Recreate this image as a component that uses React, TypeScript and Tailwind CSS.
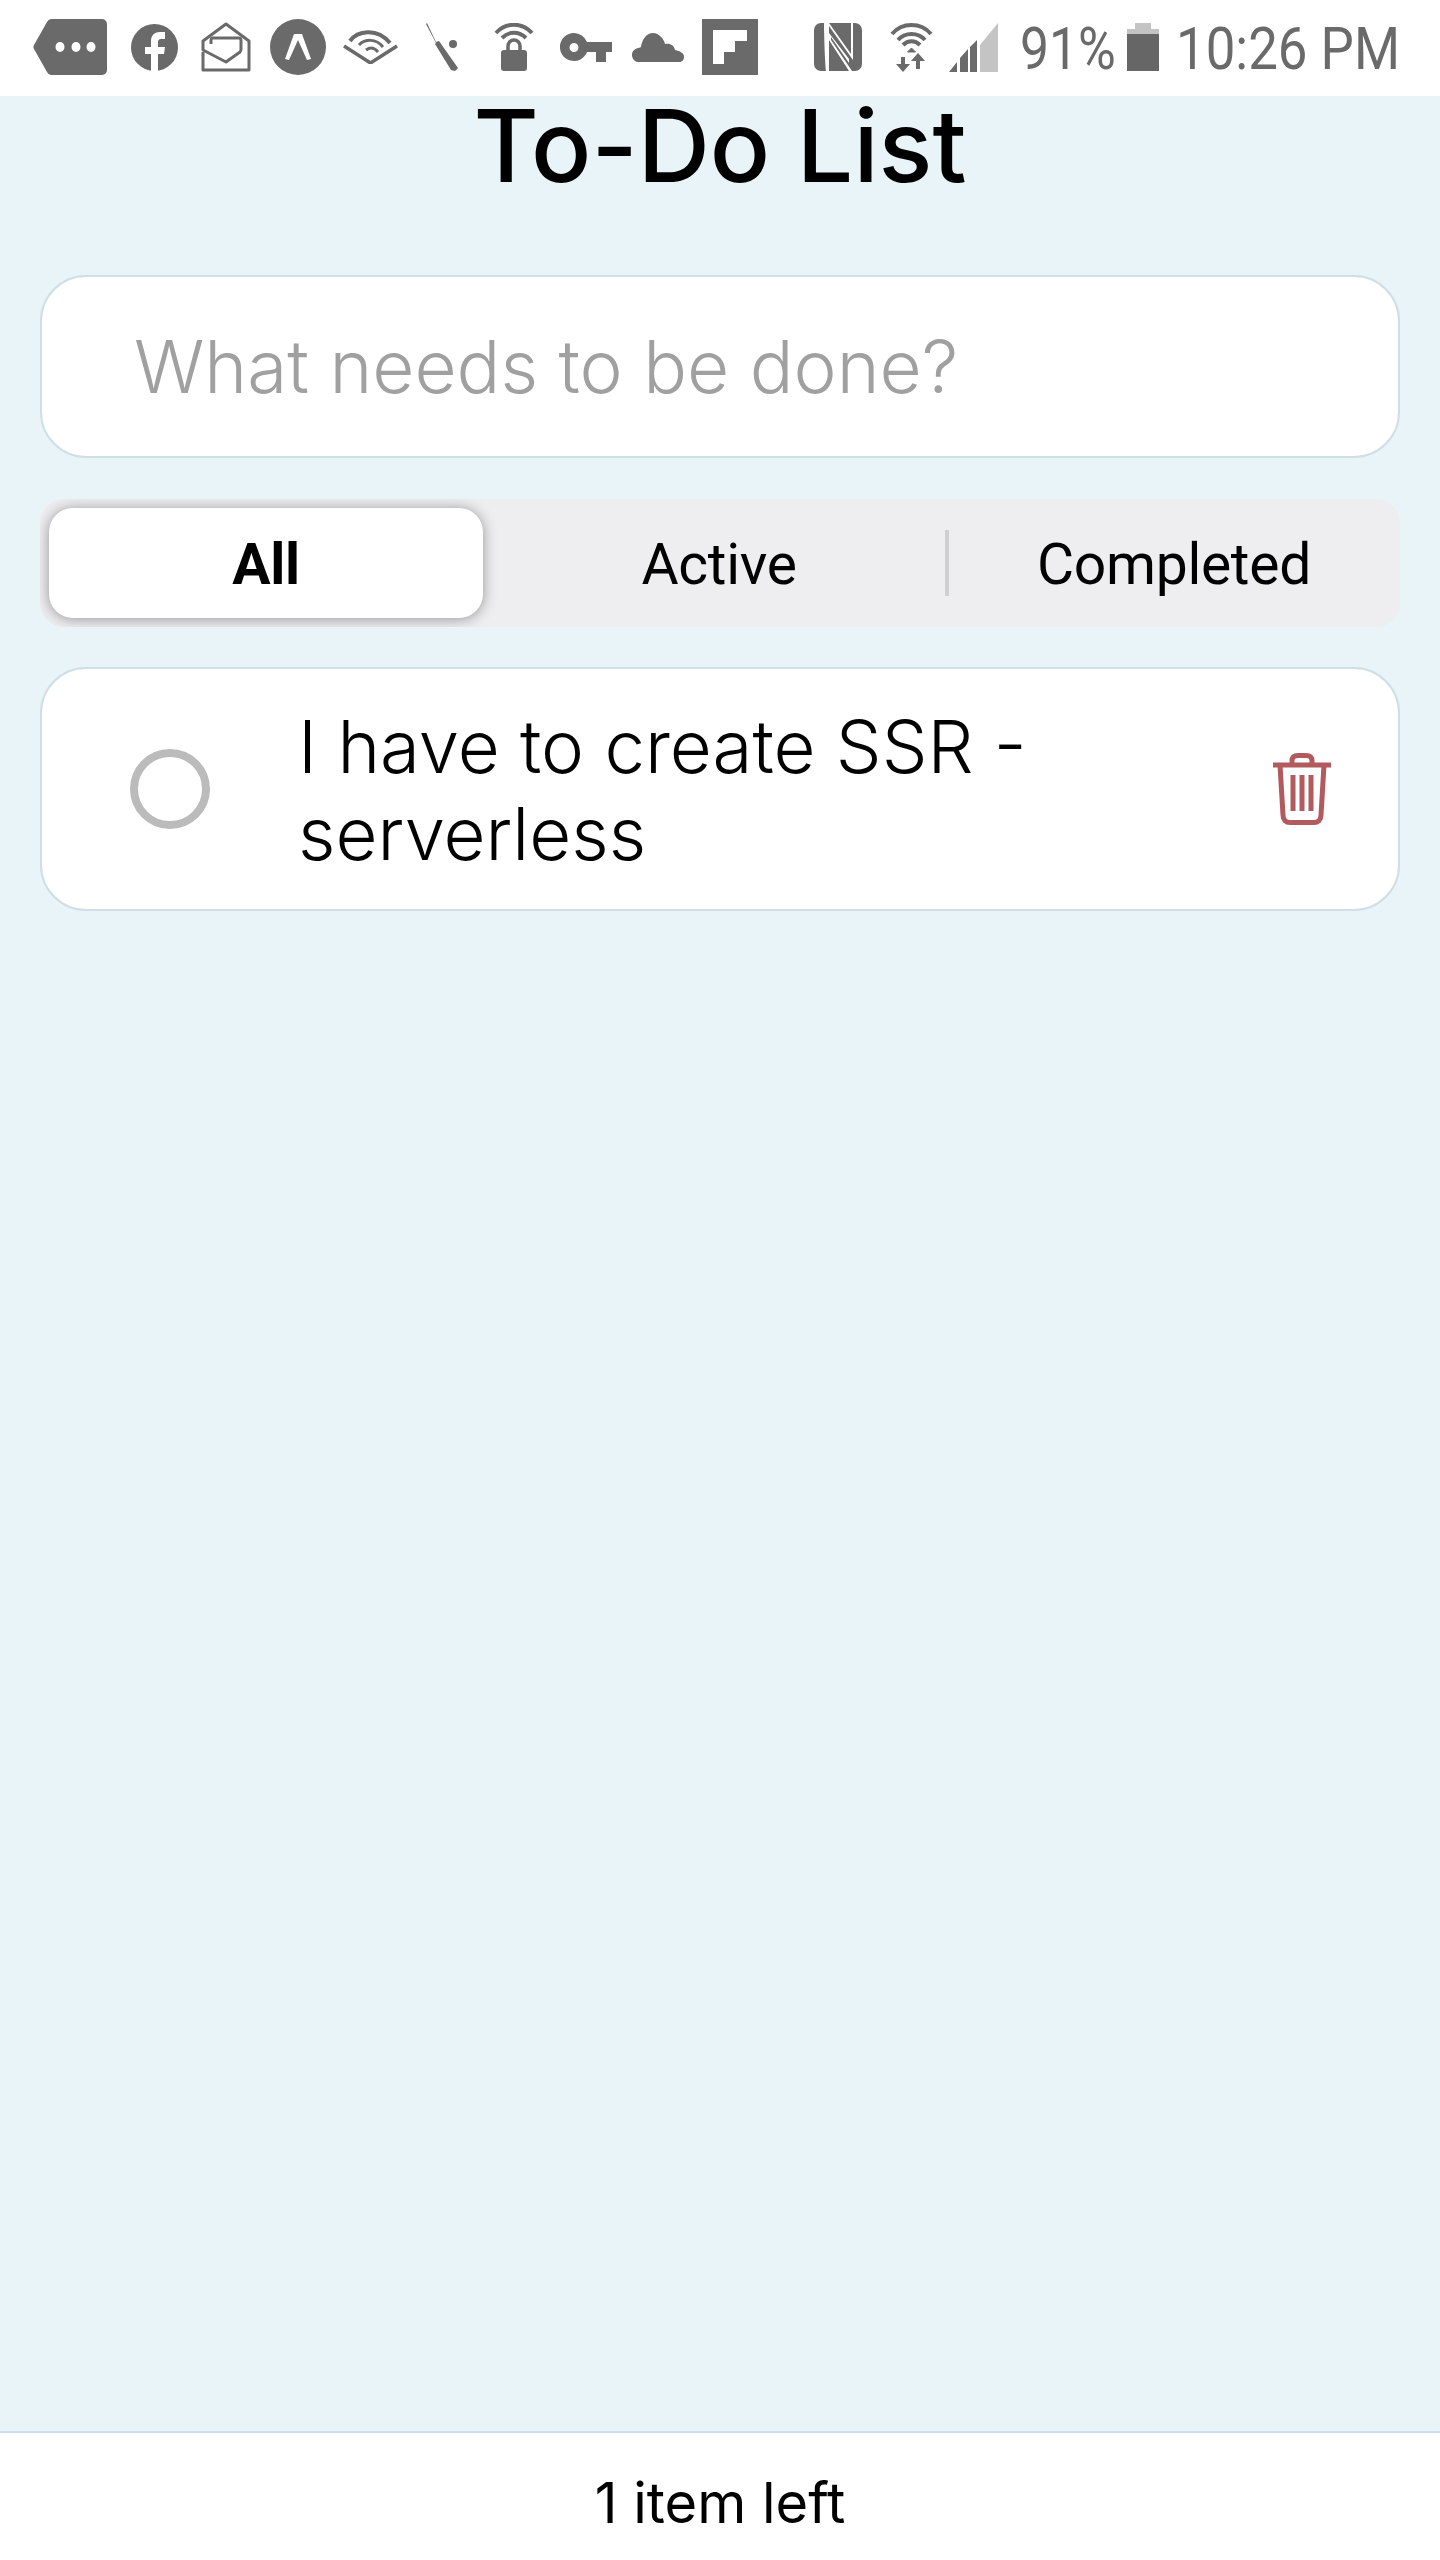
const gray = "#6a6a6a";

function TagIcon() {
  return (
    <svg width="74" height="56" viewBox="0 0 74 56" className="shrink-0">
      <path d="M18 0H69a5 5 0 0 1 5 5V51a5 5 0 0 1-5 5H18a5 5 0 0 1-4-3L1 30a4 4 0 0 1 0-4L14 3a5 5 0 0 1 4-3Z" fill={gray} />
      <ellipse cx="27" cy="28" rx="4.500" ry="5" fill="#fff" />
      <ellipse cx="43" cy="28" rx="4.500" ry="5" fill="#fff" />
      <ellipse cx="58" cy="28" rx="4.500" ry="5" fill="#fff" />
    </svg>
  );
}

function FacebookIcon() {
  return (
    <svg width="47" height="47" viewBox="0 0 47 47" className="shrink-0 ml-[24px]">
      <circle cx="23.5" cy="23.5" r="23.5" fill={gray} />
      <path d="M20 47V30h-6v-7h6v-6c0-6 4-9 9-9h5v7h-4c-2 0-3 1-3 3v5h7l-1 7h-6v17Z" fill="#fff" />
    </svg>
  );
}

function MailIcon() {
  return (
    <svg width="50" height="50" viewBox="0 0 50 50" fill="none" stroke={gray} strokeWidth="3" className="shrink-0 ml-[23px]">
      <path d="M2 30V48H48V19L25 2 2 19V28L25 40 39 30C40 29 40 28 40 27V18C40 17 39 16 38 16H12C11 16 10 17 10 18V22" strokeLinejoin="round" />
    </svg>
  );
}

function ArcIcon() {
  return (
    <svg width="56" height="56" viewBox="0 0 56 56" className="shrink-0 ml-[19px]">
      <circle cx="28" cy="28" r="28" fill={gray} />
      <path d="M15 40 24 15h8l9 25-4 1-9-20-9 20Z" fill="#fff" />
    </svg>
  );
}

function AudibleIcon() {
  return (
    <svg width="55" height="34" viewBox="0 0 55 34" fill="none" stroke={gray} className="shrink-0 ml-[17px]">
      <path d="M1 16 27.5 33 54 16" strokeWidth="3.5" />
      <path d="M7 11C14 1 34 -3 47 13" strokeWidth="4" />
      <path d="M16 15C22 9 33 8 40 17" strokeWidth="3" />
      <path d="M23 20C27 17 31 17 35 22" strokeWidth="3" />
    </svg>
  );
}

function ToolIcon() {
  return (
    <svg width="32" height="48" viewBox="0 0 32 48" className="shrink-0 ml-[28px]">
      <path d="M1 0 10 19l3-1 19 27-3 3-4-1L9 21l1-1L0 1Z" fill={gray} />
      <ellipse cx="27" cy="21" rx="4" ry="4" fill={gray} />
    </svg>
  );
}

function WifiLockIcon() {
  return (
    <svg width="40" height="48" viewBox="0 0 40 48" fill="none" className="shrink-0 ml-[36px]">
      <path d="M2 10C12 -1 28 -1 38 10" stroke={gray} strokeWidth="4" />
      <path d="M8 15C15 8 25 8 32 15" stroke={gray} strokeWidth="4" />
      <path d="M14 27v-4a6 6 0 0 1 12 0v4" stroke={gray} strokeWidth="3.5" />
      <rect x="7" y="27" width="26" height="21" rx="3" fill={gray} />
    </svg>
  );
}

function KeyIcon() {
  return (
    <svg width="52" height="29" viewBox="0 0 52 29" className="shrink-0 ml-[26px]">
      <path d="M14 0a14 14 0 0 1 13 9h25v10h-6v10h-10V19h-9A14 14 0 1 1 14 0Zm0 10a4.500 4.500 0 1 0 0 9 4.500 4.500 0 0 0 0-9Z" fill={gray} fillRule="evenodd" />
    </svg>
  );
}

function CloudIcon() {
  return (
    <svg width="52" height="29" viewBox="0 0 52 29" className="shrink-0 ml-[20px]">
      <path d="M8 29a7 7 0 0 1-2-14c2 0 2-1 3-1 1-8 6-14 12-14s11 6 12 11c5-1 9 1 10 6 5 1 9 3 9 7 0 3-2 5-5 5Z" fill={gray} />
    </svg>
  );
}

function FlipboardIcon() {
  return (
    <svg width="56" height="56" viewBox="0 0 56 56" className="shrink-0 ml-[18px]">
      <path d="M0 0H56V56H0Z" fill={gray} />
      <path d="M11 11H45V22H33V33H22V45H11Z" fill="#fff" />
    </svg>
  );
}

function NfcIcon() {
  return (
    <svg width="48" height="48" viewBox="0 0 48 48" className="shrink-0 ml-[56px]">
      <rect width="48" height="48" rx="7" fill={gray} />
      <path d="M10 0H15L37 31V0H39V37L15 3V48H12C11 40 10 10 10 0Z" fill="#fff" />
      <path d="M15 17 35 48H38L17 17V14L35 40V36L15 10Z" fill="#fff" />
    </svg>
  );
}

function WifiDataIcon() {
  return (
    <svg width="43" height="49" viewBox="0 0 43 49" fill="none" stroke={gray} className="shrink-0 ml-[28px]">
      <path d="M2 11C12 -1 31 -1 41 11" strokeWidth="4" />
      <path d="M8 17C15 9 28 9 35 17" strokeWidth="4" />
      <path d="M13 22C18 17 25 17 30 22" strokeWidth="4" />
      <path d="M21.500 25l-4 4h8Z" fill={gray} strokeWidth="1" />
      <path d="M13 34v11M28 46V35" strokeWidth="4" />
      <path d="M6 41h14l-7 8ZM21 38h14l-7-8Z" fill={gray} stroke="none" />
    </svg>
  );
}

function SignalIcon() {
  return (
    <svg width="49" height="49" viewBox="0 0 49 49" className="shrink-0 ml-[16px]">
      <path d="M49 0V49H31V22Z" fill="#c4c4c4" />
      <path d="M0 49 8 39V49ZM11 49V35l8-9V49ZM21 49V24l7-7V49Z" fill={gray} />
    </svg>
  );
}

function BatteryIcon() {
  return (
    <svg width="32" height="48" viewBox="0 0 32 48" className="shrink-0 ml-[13px]">
      <rect x="8" y="0" width="16" height="6" fill="#c4c4c4" />
      <rect x="0" y="6" width="32" height="5" fill="#c4c4c4" />
      <rect x="0" y="11" width="32" height="37" fill="#666" />
    </svg>
  );
}

// the stock trash icons have only two bars, this one has three and a narrow lid
function TrashIcon() {
  return (
    <svg width="58" height="72" viewBox="0 0 58 72" fill="none" stroke="#b25b5f" strokeWidth="5" className="ml-auto mr-[67px] shrink-0">
      <path d="M0 12H58" />
      <path d="M19 11V8C19 4 21 2.500 25 2.500H33C37 2.500 39 4 39 8V11" />
      <path d="M7 12 10 62C10 67 13 69.500 17 69.500H41C45 69.500 48 67 48 62L51 12" />
      <path d="M20 22V58M29 22V58M38 22V58" />
    </svg>
  );
}

function StatusBar() {
  return (
    <div className="flex h-24 shrink-0 items-center whitespace-nowrap bg-white pb-[2px] pl-[33px] [font-family:Roboto,sans-serif]">
      <TagIcon />
      <FacebookIcon />
      <MailIcon />
      <ArcIcon />
      <AudibleIcon />
      <ToolIcon />
      <WifiLockIcon />
      <KeyIcon />
      <CloudIcon />
      <FlipboardIcon />
      <NfcIcon />
      <WifiDataIcon />
      <SignalIcon />
      <span className="ml-[22px] mt-[4px] w-[94px] origin-left scale-x-[0.86] text-[60px] leading-none text-[#6a6a6a]">91%</span>
      <BatteryIcon />
      <span className="ml-[17px] mt-[4px] w-[219px] origin-left scale-x-[0.88] text-[60px] leading-none text-[#6a6a6a]">10:26 PM</span>
    </div>
  );
}

export default function App() {
  return (
    <div className="flex h-[2560px] flex-col bg-[#e8f4f8] text-black [font-family:Inter,'Noto_Sans',sans-serif]">
      <StatusBar />
      <div className="flex flex-1 flex-col px-10">
        <h1 className="text-center text-[100px] leading-[100px] font-medium">To-Do List</h1>
        <div className="mt-[79px] flex h-[183px] items-center rounded-[46px] border-2 border-[#cfdfe6] bg-white pl-[92px] text-[72.800px] font-light text-[#a0a0a0]">
          What needs to be done?
        </div>
        <div className="mt-[41px] flex h-[128px] overflow-hidden rounded-[24px] bg-[#eeeef0] p-[9px] text-[57px] tracking-[-0.3px] [font-family:Roboto,sans-serif]">
          <div className="flex w-[434px] items-center justify-center rounded-[24px] bg-white pt-[4px] font-bold shadow-[0_1px_14px_rgba(0,0,0,0.38)]">All</div>
          <div className="flex flex-1 items-center justify-center pl-[10px] pt-[4px]">Active</div>
          <div className="my-[22px] w-[4px] bg-[#cfcfcf]"></div>
          <div className="flex w-[442px] items-center justify-center pl-[8px] pt-[4px]">Completed</div>
        </div>
        <div className="mt-[40px] flex h-[244px] items-center rounded-[46px] border-2 border-[#cfdfe6] bg-white">
          <div className="ml-[88px] h-20 w-20 shrink-0 rounded-full border-8 border-[#bbbbbb]"></div>
          <div className="ml-[88px] w-[800px] pt-[2px] text-[72.500px] leading-[87px] font-light">I have to create SSR - serverless</div>
          <TrashIcon />
        </div>
      </div>
      <div className="flex h-[129px] items-center justify-center border-t-2 border-[#cfdfe6] bg-white pt-[12px] text-[56px]">1 item left</div>
    </div>
  );
}
